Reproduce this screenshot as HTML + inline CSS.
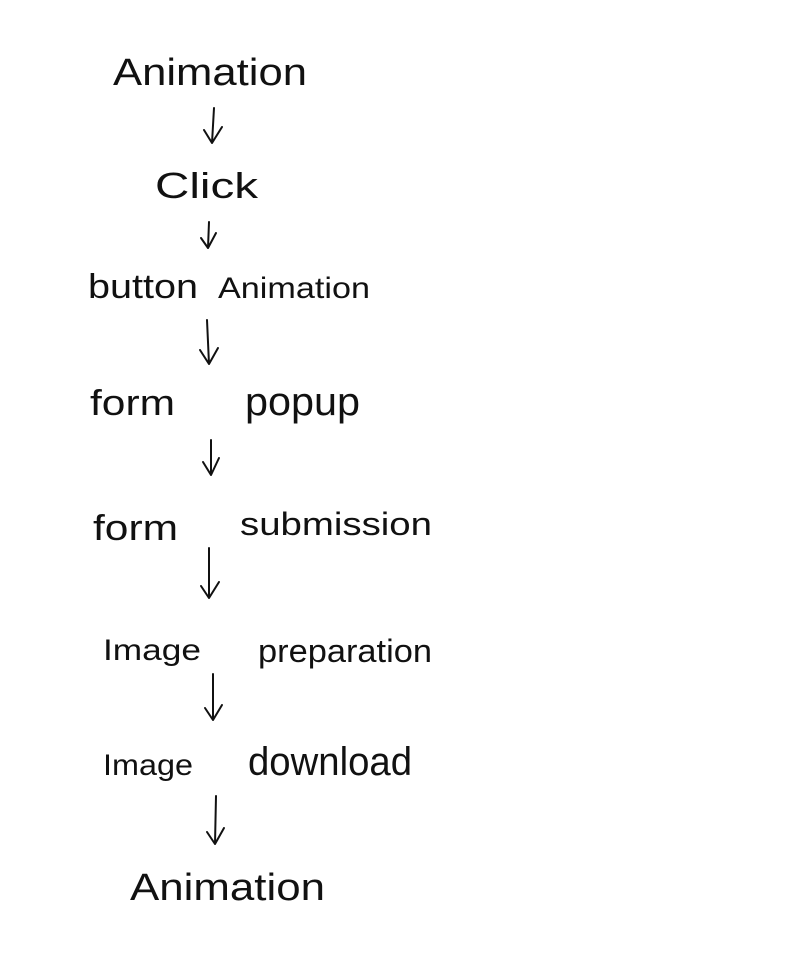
<!DOCTYPE html>
<html><head><meta charset="utf-8"><style>
html,body{margin:0;padding:0;background:#fff;}
svg{display:block}
text{font-family:"Liberation Sans",sans-serif;fill:#111;font-weight:normal}
path{stroke:#111;stroke-width:2;fill:none;stroke-linecap:round;stroke-linejoin:round}
</style></head><body>
<svg width="800" height="970" viewBox="0 0 800 970">
<text x="113" y="85" font-size="38" textLength="194" lengthAdjust="spacingAndGlyphs">Animation</text>
<path d="M214 108 L212 143 M204 130 L212 143 L222 127"/>
<text x="155" y="198" font-size="36" textLength="103" lengthAdjust="spacingAndGlyphs">Click</text>
<path d="M209 222 L208 248 M201 238 L208 248 L216 233"/>
<text x="88" y="298" font-size="34" textLength="110" lengthAdjust="spacingAndGlyphs">button</text>
<text x="218" y="298" font-size="30" textLength="152" lengthAdjust="spacingAndGlyphs">Animation</text>
<path d="M207 320 L209 364 M200 350 L209 364 L218 348"/>
<text x="90" y="415" font-size="36" textLength="85" lengthAdjust="spacingAndGlyphs">form</text>
<text x="245" y="415" font-size="40" textLength="115" lengthAdjust="spacingAndGlyphs">popup</text>
<path d="M211 440 L211 475 M203 462 L211 475 L219 458"/>
<text x="93" y="540" font-size="36" textLength="85" lengthAdjust="spacingAndGlyphs">form</text>
<text x="240" y="535" font-size="32" textLength="192" lengthAdjust="spacingAndGlyphs">submission</text>
<path d="M209 548 L209 598 M201 586 L209 598 L219 582"/>
<text x="103" y="660" font-size="30" textLength="98" lengthAdjust="spacingAndGlyphs">Image</text>
<text x="258" y="662" font-size="32" textLength="174" lengthAdjust="spacingAndGlyphs">preparation</text>
<path d="M213 674 L213 720 M205 708 L213 720 L222 705"/>
<text x="103" y="775" font-size="30" textLength="90" lengthAdjust="spacingAndGlyphs">Image</text>
<text x="248" y="775" font-size="40" textLength="164" lengthAdjust="spacingAndGlyphs">download</text>
<path d="M216 796 L215 844 M207 832 L215 844 L224 828"/>
<text x="130" y="900" font-size="38" textLength="195" lengthAdjust="spacingAndGlyphs">Animation</text>
</svg>
</body></html>
